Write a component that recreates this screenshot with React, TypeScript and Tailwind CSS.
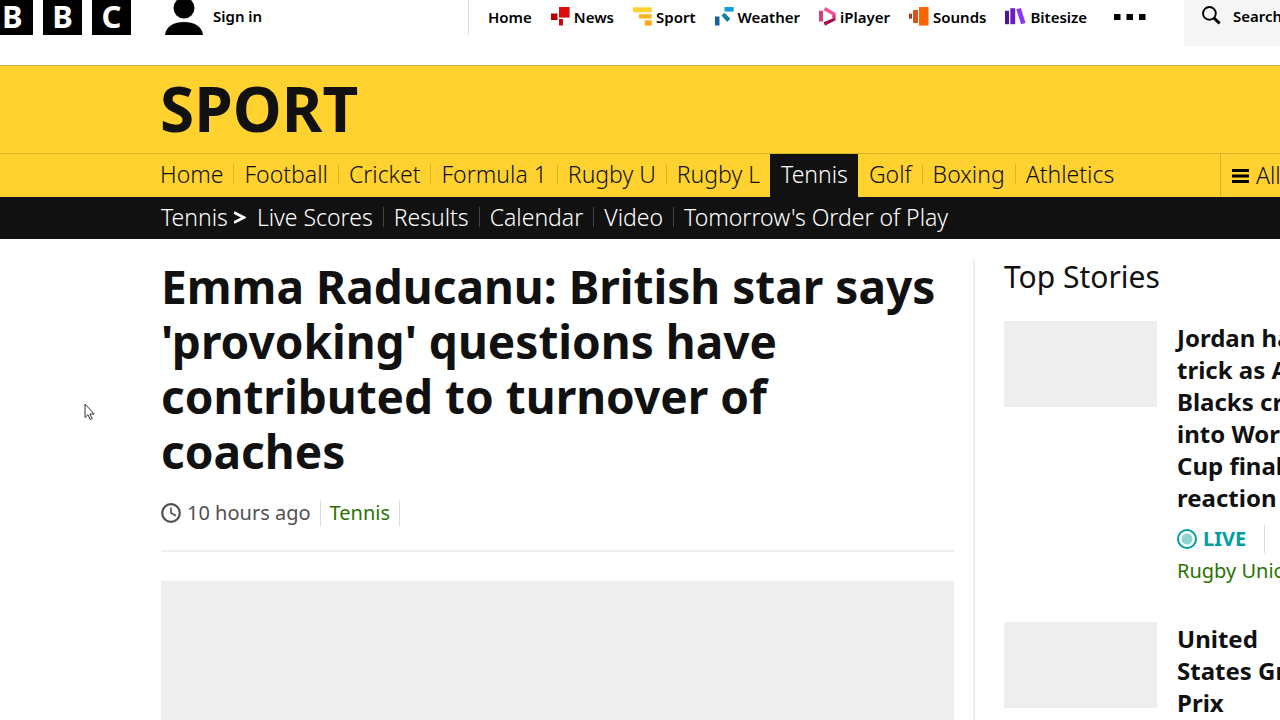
import type { ReactNode } from 'react';

interface NavItem {
  label: string;
  icon?: ReactNode;
  active?: boolean;
}

const NewsIcon = () => (
  <svg viewBox="0 0 19 19" className="h-[19px] w-[19px]">
    <path fill="#dd0b0f" d="M8 0h10.600v10.600H8z" />
    <path fill="#b80000" d="M0 6.500h6.500V13H0z" />
    <path fill="#c8060a" d="M8 12h4v6.500H8z" />
  </svg>
);

const SportIcon = () => (
  <svg viewBox="0 0 19 19" className="h-[19px] w-[19px]">
    <path fill="#ffd230" d="M0 .3h18.700v5H0z" />
    <path fill="#ffb61a" d="M6 7.200h12.700v4.400H6z" />
    <path fill="#ffa51e" d="M11.800 13.300h6.900v5.300h-6.900z" />
  </svg>
);

const WeatherIcon = () => (
  <svg viewBox="0 0 19 19" className="h-[19px] w-[19px]">
    <path fill="#149edc" d="M9.500 0h9.200v4.600H9.500z" />
    <path fill="#1380a1" d="M6.500 8.600 9.600 5.800l5.800 6-3.200 3.100z" />
    <path fill="#1062a5" d="M0 9.500h4.500v9H0z" />
  </svg>
);

const PlayerIcon = () => (
  <svg viewBox="0 0 17 19" className="h-[19px] w-[17px]">
    <path fill="#d63d7c" d="M0 3.800h4v10.700H0z" />
    <path fill="#ff4c98" d="M6.200 0 16.500 6v4.500h-3V8L4.800 3.200z" />
    <path fill="#a30a50" d="M16.500 10.200v3L6 18.700l-1.400-3.400z" />
    <path fill="#d63d7c" d="M13.500 7.500h3v3.200l-3 1.500z" />
  </svg>
);

const SoundsIcon = () => (
  <svg viewBox="0 0 20 19" className="h-[19px] w-5">
    <path fill="#a93c1a" d="M0 6.700h3v5H0z" />
    <path fill="#d2561d" d="M4 3h5v13H4z" />
    <path fill="#fa6400" d="M10 0h9.500v18.600H10z" />
  </svg>
);

const BitesizeIcon = () => (
  <svg viewBox="0 0 21 19" className="h-[19px] w-[21px]">
    <path fill="#4d1296" d="M0 3.800h4v13.400H0z" />
    <path fill="#6b1fc0" d="M5.300 1.200h4.900v16H5.300z" />
    <path fill="#8a38f5" d="m11.300 2.200 4.600-1.300L20.600 16l-4.500 1.300z" />
  </svg>
);

const siteLinks: NavItem[] = [
  { label: 'Home' },
  { label: 'News', icon: <NewsIcon /> },
  { label: 'Sport', icon: <SportIcon /> },
  { label: 'Weather', icon: <WeatherIcon /> },
  { label: 'iPlayer', icon: <PlayerIcon /> },
  { label: 'Sounds', icon: <SoundsIcon /> },
  { label: 'Bitesize', icon: <BitesizeIcon /> },
];

const sportLinks: NavItem[] = [
  { label: 'Home' },
  { label: 'Football' },
  { label: 'Cricket' },
  { label: 'Formula 1' },
  { label: 'Rugby U' },
  { label: 'Rugby L' },
  { label: 'Tennis', active: true },
  { label: 'Golf' },
  { label: 'Boxing' },
  { label: 'Athletics' },
];

const tennisLinks = ['Live Scores', 'Results', 'Calendar', 'Video', "Tomorrow's Order of Play"];

interface Story {
  lines: string[];
  live?: boolean;
  topic?: string;
}

const stories: Story[] = [
  {
    lines: ['Jordan hat-', 'trick as All', 'Blacks cruise', 'into World', 'Cup final -', 'reaction'],
    live: true,
    topic: 'Rugby Union',
  },
  { lines: ['United', 'States Grand', 'Prix'] },
];

function SiteHeader() {
  return (
    <header className="flex h-[65px] items-start overflow-hidden whitespace-nowrap text-[15px] font-semibold text-black">
      <a href="#bbc" aria-label="BBC" className="flex h-[35px] gap-[10px] text-[31px] leading-[33px] font-bold text-white">
        <span className="w-[33px] bg-black pl-[2px]">B</span>
        <span className="w-[39px] bg-black text-center">B</span>
        <span className="w-[39px] bg-black text-center">C</span>
      </a>
      <a href="#signin" className="ml-[34px] flex h-[35px] w-[303px] gap-[10px] leading-8">
        <svg viewBox="0 0 38 35" className="h-[35px] w-[38px]">
          <circle cx="19" cy="8" r="10.500" />
          <path d="M0 35C1 26 9 22 19 22s18 4 19 13z" />
        </svg>
        Sign in
      </a>
      <nav aria-label="BBC" className="flex h-[35px] flex-1 items-center border-l border-[#dddddd] pb-[2px] pl-[19px]">
        <ul className="flex gap-[19px]">
          {siteLinks.map(({ label, icon }) => (
            <li key={label}>
              <a href="#site" className="flex items-center gap-1 leading-5">
                {icon}
                {label}
              </a>
            </li>
          ))}
        </ul>
        <button type="button" aria-label="More menu" className="ml-[27px]">
          <svg viewBox="0 0 32 6" className="h-[6px] w-8">
            <path d="M0 0h6.500v6H0zM12.500 0H19v6h-6.500zM25 0h6.500v6H25z" />
          </svg>
        </button>
      </nav>
      <a href="#search" className="flex h-[46px] w-24 shrink-0 gap-3 overflow-hidden bg-[#f6f6f6] pl-[18px] leading-8">
        <svg viewBox="0 0 20 20" fill="none" stroke="currentColor" className="mt-[6px] h-[19px] w-[19px] shrink-0">
          <circle cx="7.800" cy="7.800" r="6.700" strokeWidth="2" />
          <path d="m12.500 12.500 6 6" strokeWidth="3" />
        </svg>
        Search BBC
      </a>
    </header>
  );
}

function SportHeader() {
  return (
    <div className="overflow-hidden border-t border-[#d1b04a] bg-[#ffd230] whitespace-nowrap text-[#111111]">
      <div className="flex h-[87px] items-center pb-1 pl-40 text-[62px] leading-none font-bold">
        <a href="#sport">SPORT</a>
      </div>
      <nav aria-label="Sport" className="flex h-11 border-t border-[#dbb42a] pl-[149px] text-[23px] font-[350]">
        <ul className="flex flex-1">
          {sportLinks.map(({ label, active }, i) => {
            const divided = i > 0 && !active && !sportLinks[i - 1].active;
            return (
              <li key={label} className={active ? 'bg-[#111111] text-white' : 'text-[#111111]'}>
                <a
                  href="#topic"
                  className={`mt-[10px] block border-l px-[10px] leading-5 ${divided ? 'border-[#dbb42a]' : 'border-transparent'}`}
                >
                  {label}
                </a>
              </li>
            );
          })}
        </ul>
        <button type="button" className="flex w-[60px] items-center gap-[7px] overflow-hidden border-l border-[#dbb42a] pl-[11px]">
          <svg viewBox="0 0 17 14" className="h-[14px] w-[17px] shrink-0">
            <path d="M0 0h17v3H0zM0 5.500h17v3H0zM0 11h17v3H0z" />
          </svg>
          All Sport
        </button>
      </nav>
      <nav
        aria-label="Tennis"
        className="flex h-[42px] items-center bg-[#111111] pb-[2px] pl-[161px] text-[23px] leading-5 font-[350] text-white"
      >
        <a href="#tennis" className="flex items-center gap-[6px]">
          Tennis
          <svg viewBox="0 0 12 13" fill="none" stroke="currentColor" strokeWidth="2.800" className="h-[13px] w-3">
            <path d="m0 1.500 10 5-10 5" />
          </svg>
        </a>
        <ul className="flex">
          {tennisLinks.map((label, i) => (
            <li key={label} className={`border-l px-[10px] ${i > 0 ? 'border-[#444444]' : 'border-transparent'}`}>
              <a href="#section">{label}</a>
            </li>
          ))}
        </ul>
      </nav>
    </div>
  );
}

function StoryItem({ story }: { story: Story }) {
  return (
    <li className="flex items-start gap-5">
      <div className="h-[86px] w-[153px] shrink-0 bg-[#eeeeee]" />
      <div className="pt-px whitespace-nowrap">
        <h3 className="text-[24px] leading-[32px] font-bold">
          <a href="#story">
            {story.lines.map((line) => (
              <span key={line} className="block">
                {line}
              </span>
            ))}
          </a>
        </h3>
        {story.live && (
          <div className="mt-[9px] flex h-8 items-center text-[20px] font-bold text-[#009e9e]">
            <svg viewBox="0 0 20 20" className="mr-[6px] h-5 w-5">
              <circle cx="10" cy="10" r="9" fill="none" stroke="currentColor" strokeWidth="2" />
              <circle cx="10" cy="10" r="5.500" fill="#8fd4d0" />
            </svg>
            LIVE
            <span className="ml-[18px] h-7 border-l border-[#dddddd]" />
          </div>
        )}
        {story.topic && (
          <a href="#topic" className="block text-[20px] leading-8 text-[#2b7300]">
            {story.topic}
          </a>
        )}
      </div>
    </li>
  );
}

export default function App() {
  return (
    <div className="relative h-screen overflow-hidden bg-white font-['Noto_Sans','Open_Sans',sans-serif] text-[#111111]">
      <SiteHeader />
      <SportHeader />
      <main className="flex items-start pl-[161px]">
        <article className="flex-1 pt-5 pr-[19px]">
          <h1 className="text-[46px] leading-[55px] font-bold">
            Emma Raducanu: British star says 'provoking' questions have contributed to turnover of coaches
          </h1>
          <div className="mt-5 flex h-7 items-center text-[20px]">
            <svg viewBox="0 0 20 20" fill="none" stroke="#505050" className="mr-[6px] h-5 w-5">
              <circle cx="10" cy="10" r="8.800" strokeWidth="2.200" />
              <path d="M10 4.500V10l5 2.800" strokeWidth="1.600" />
            </svg>
            <time className="text-[#505050]">10 hours ago</time>
            <a href="#tennis" className="ml-[9px] border-x border-[#dddddd] px-[9px] leading-[26px] text-[#2b7300]">
              Tennis
            </a>
          </div>
          <div className="mt-[23px] border-t-2 border-[#eeeeee]" />
          <div className="mt-[29px] h-[446px] bg-[#eeeeee]" />
        </article>
        <aside className="mt-5 h-[600px] w-[307px] shrink-0 overflow-hidden border-l-2 border-[#eeeeee] pl-[29px]">
          <h2 className="text-[30px] leading-9">Top Stories</h2>
          <ul className="mt-[26px] flex flex-col gap-[35px]">
            {stories.map((story) => (
              <StoryItem key={story.lines[0]} story={story} />
            ))}
          </ul>
        </aside>
      </main>
      <svg viewBox="0 0 11 18" className="absolute top-[403px] left-[84px] h-[18px] w-[11px]">
        <path d="M1 1v13.500l3-2.800 2.200 4.800 2-.9L6 11h4.200z" fill="#ffffff" stroke="#333333" />
      </svg>
    </div>
  );
}
